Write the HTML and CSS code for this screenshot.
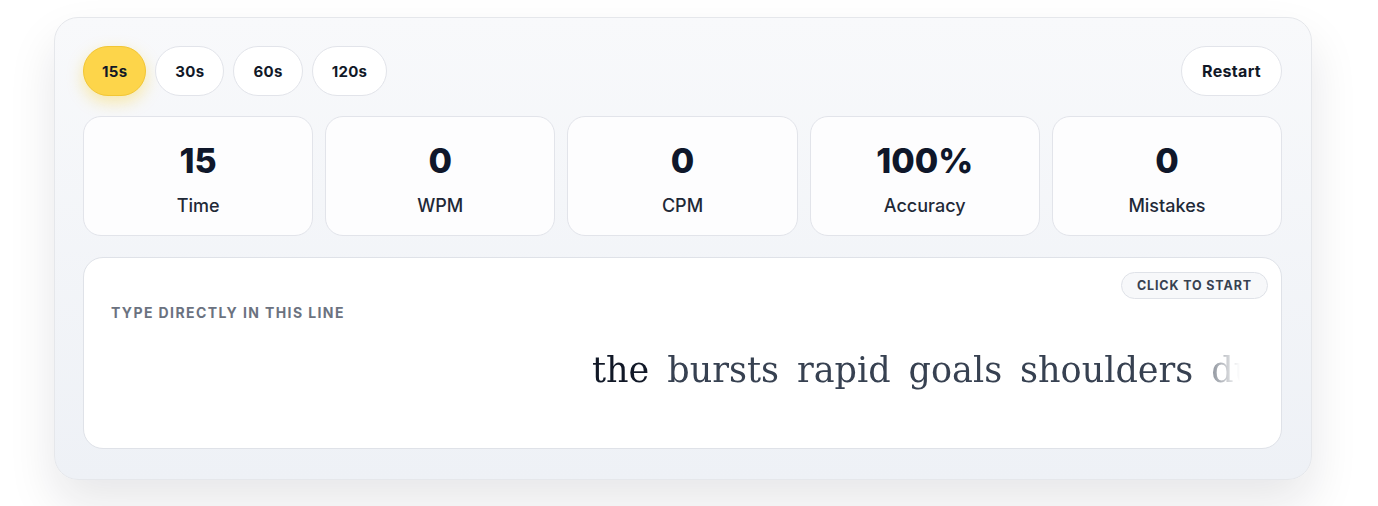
FILE: index.html
```html
<!DOCTYPE html>
<html>
    <head>
        <meta charset="utf-8">
        <title>Typing test</title>
        <link rel="stylesheet" href="styles.css">
    </head>
    <body>
        <div class="page">
            <div class="panel">
                <div class="toolbar">
                    <div class="durations">
                        <button class="pill active">15s</button>
                        <button class="pill">30s</button>
                        <button class="pill">60s</button>
                        <button class="pill">120s</button>
                    </div>
                    <button class="pill restart">Restart</button>
                </div>

                <div class="stats">
                    <div class="stat">
                        <div class="stat-value">15</div>
                        <div class="stat-label">Time</div>
                    </div>
                    <div class="stat">
                        <div class="stat-value">0</div>
                        <div class="stat-label">WPM</div>
                    </div>
                    <div class="stat">
                        <div class="stat-value">0</div>
                        <div class="stat-label">CPM</div>
                    </div>
                    <div class="stat">
                        <div class="stat-value">100%</div>
                        <div class="stat-label">Accuracy</div>
                    </div>
                    <div class="stat">
                        <div class="stat-value">0</div>
                        <div class="stat-label">Mistakes</div>
                    </div>
                </div>

                <div class="typing">
                    <div class="typing-head">
                        <div class="hint">Type directly in this line</div>
                        <div class="badge">Click to start</div>
                    </div>
                    <div class="line">
                        <div class="words">
                            <span class="word current">the</span>
                            <span class="word">bursts</span>
                            <span class="word">rapid</span>
                            <span class="word">goals</span>
                            <span class="word">shoulders</span>
                            <span class="word">during</span>
                        </div>
                    </div>
                </div>
            </div>
        </div>
    </body>
</html>
```

FILE: styles.css
```css
* {
    box-sizing: border-box;
}

body {
    margin: 0;
    background: #ffffff;
    font-family: Inter, "Noto Sans", sans-serif;
    color: #111827;
}

.page {
    padding: 17px 0 40px 54px;
}

.panel {
    width: 1258px;
    padding: 28px 29px 30px 28px;
    border: 1px solid #e5e7eb;
    border-radius: 24px;
    background: linear-gradient(180deg, #f8f9fb 0%, #eef1f6 100%);
    box-shadow: 0 24px 48px rgba(15, 23, 42, 0.1);
}

.toolbar {
    display: flex;
    justify-content: space-between;
    align-items: center;
}

.durations {
    display: flex;
    gap: 9px;
}

.pill {
    height: 50px;
    padding: 0 19px;
    border: 1px solid #e2e4ea;
    border-radius: 25px;
    background: #ffffff;
    font-family: inherit;
    font-size: 15px;
    font-weight: 700;
    letter-spacing: 0.02em;
    color: #111827;
}

.pill.active {
    padding: 0 18px;
    background: #fdd54a;
    border-color: #f2c634;
    box-shadow: 0 6px 16px rgba(250, 204, 21, 0.35);
}

.restart {
    padding: 0 20px;
    font-size: 16px;
}

.stats {
    display: grid;
    grid-template-columns: repeat(5, 1fr);
    gap: 12px;
    margin-top: 20px;
}

.stat {
    height: 120px;
    border: 1px solid #e2e4ea;
    border-radius: 18px;
    background: #fdfdfe;
    text-align: center;
    padding-top: 22px;
}

.stat-value {
    font-size: 34px;
    font-weight: 800;
    line-height: 44px;
    color: #0f172a;
}

.stat-label {
    margin-top: 10px;
    font-size: 18px;
    font-weight: 500;
    line-height: 26px;
    color: #1f2937;
}

.typing {
    margin-top: 21px;
    height: 192px;
    border: 1px solid #dfe2e8;
    border-radius: 20px;
    background: #ffffff;
    padding: 14px 13px 0 27px;
}

.typing-head {
    display: flex;
    justify-content: space-between;
    align-items: flex-start;
}

.hint {
    margin-top: 32px;
    font-size: 14px;
    font-weight: 700;
    letter-spacing: 0.1em;
    text-transform: uppercase;
    color: #6b7280;
}

.badge {
    height: 27px;
    padding: 0 15px;
    border: 1px solid #dfe2e8;
    border-radius: 14px;
    background: #f7f8fa;
    font-size: 12.5px;
    font-weight: 700;
    line-height: 25px;
    letter-spacing: 0.07em;
    text-transform: uppercase;
    color: #374151;
}

.line {
    margin-top: 22px;
    width: 1129px;
    overflow: hidden;
    -webkit-mask-image: linear-gradient(90deg, #000 0%, #000 95.5%, transparent 100%);
    mask-image: linear-gradient(90deg, #000 0%, #000 95.5%, transparent 100%);
}

.words {
    display: flex;
    gap: 18px;
    padding-left: 481px;
    white-space: nowrap;
    font-family: "DejaVu Serif", Georgia, serif;
    font-size: 35px;
    line-height: 54px;
    color: #374151;
}

.word.current {
    color: #111827;
}
```
